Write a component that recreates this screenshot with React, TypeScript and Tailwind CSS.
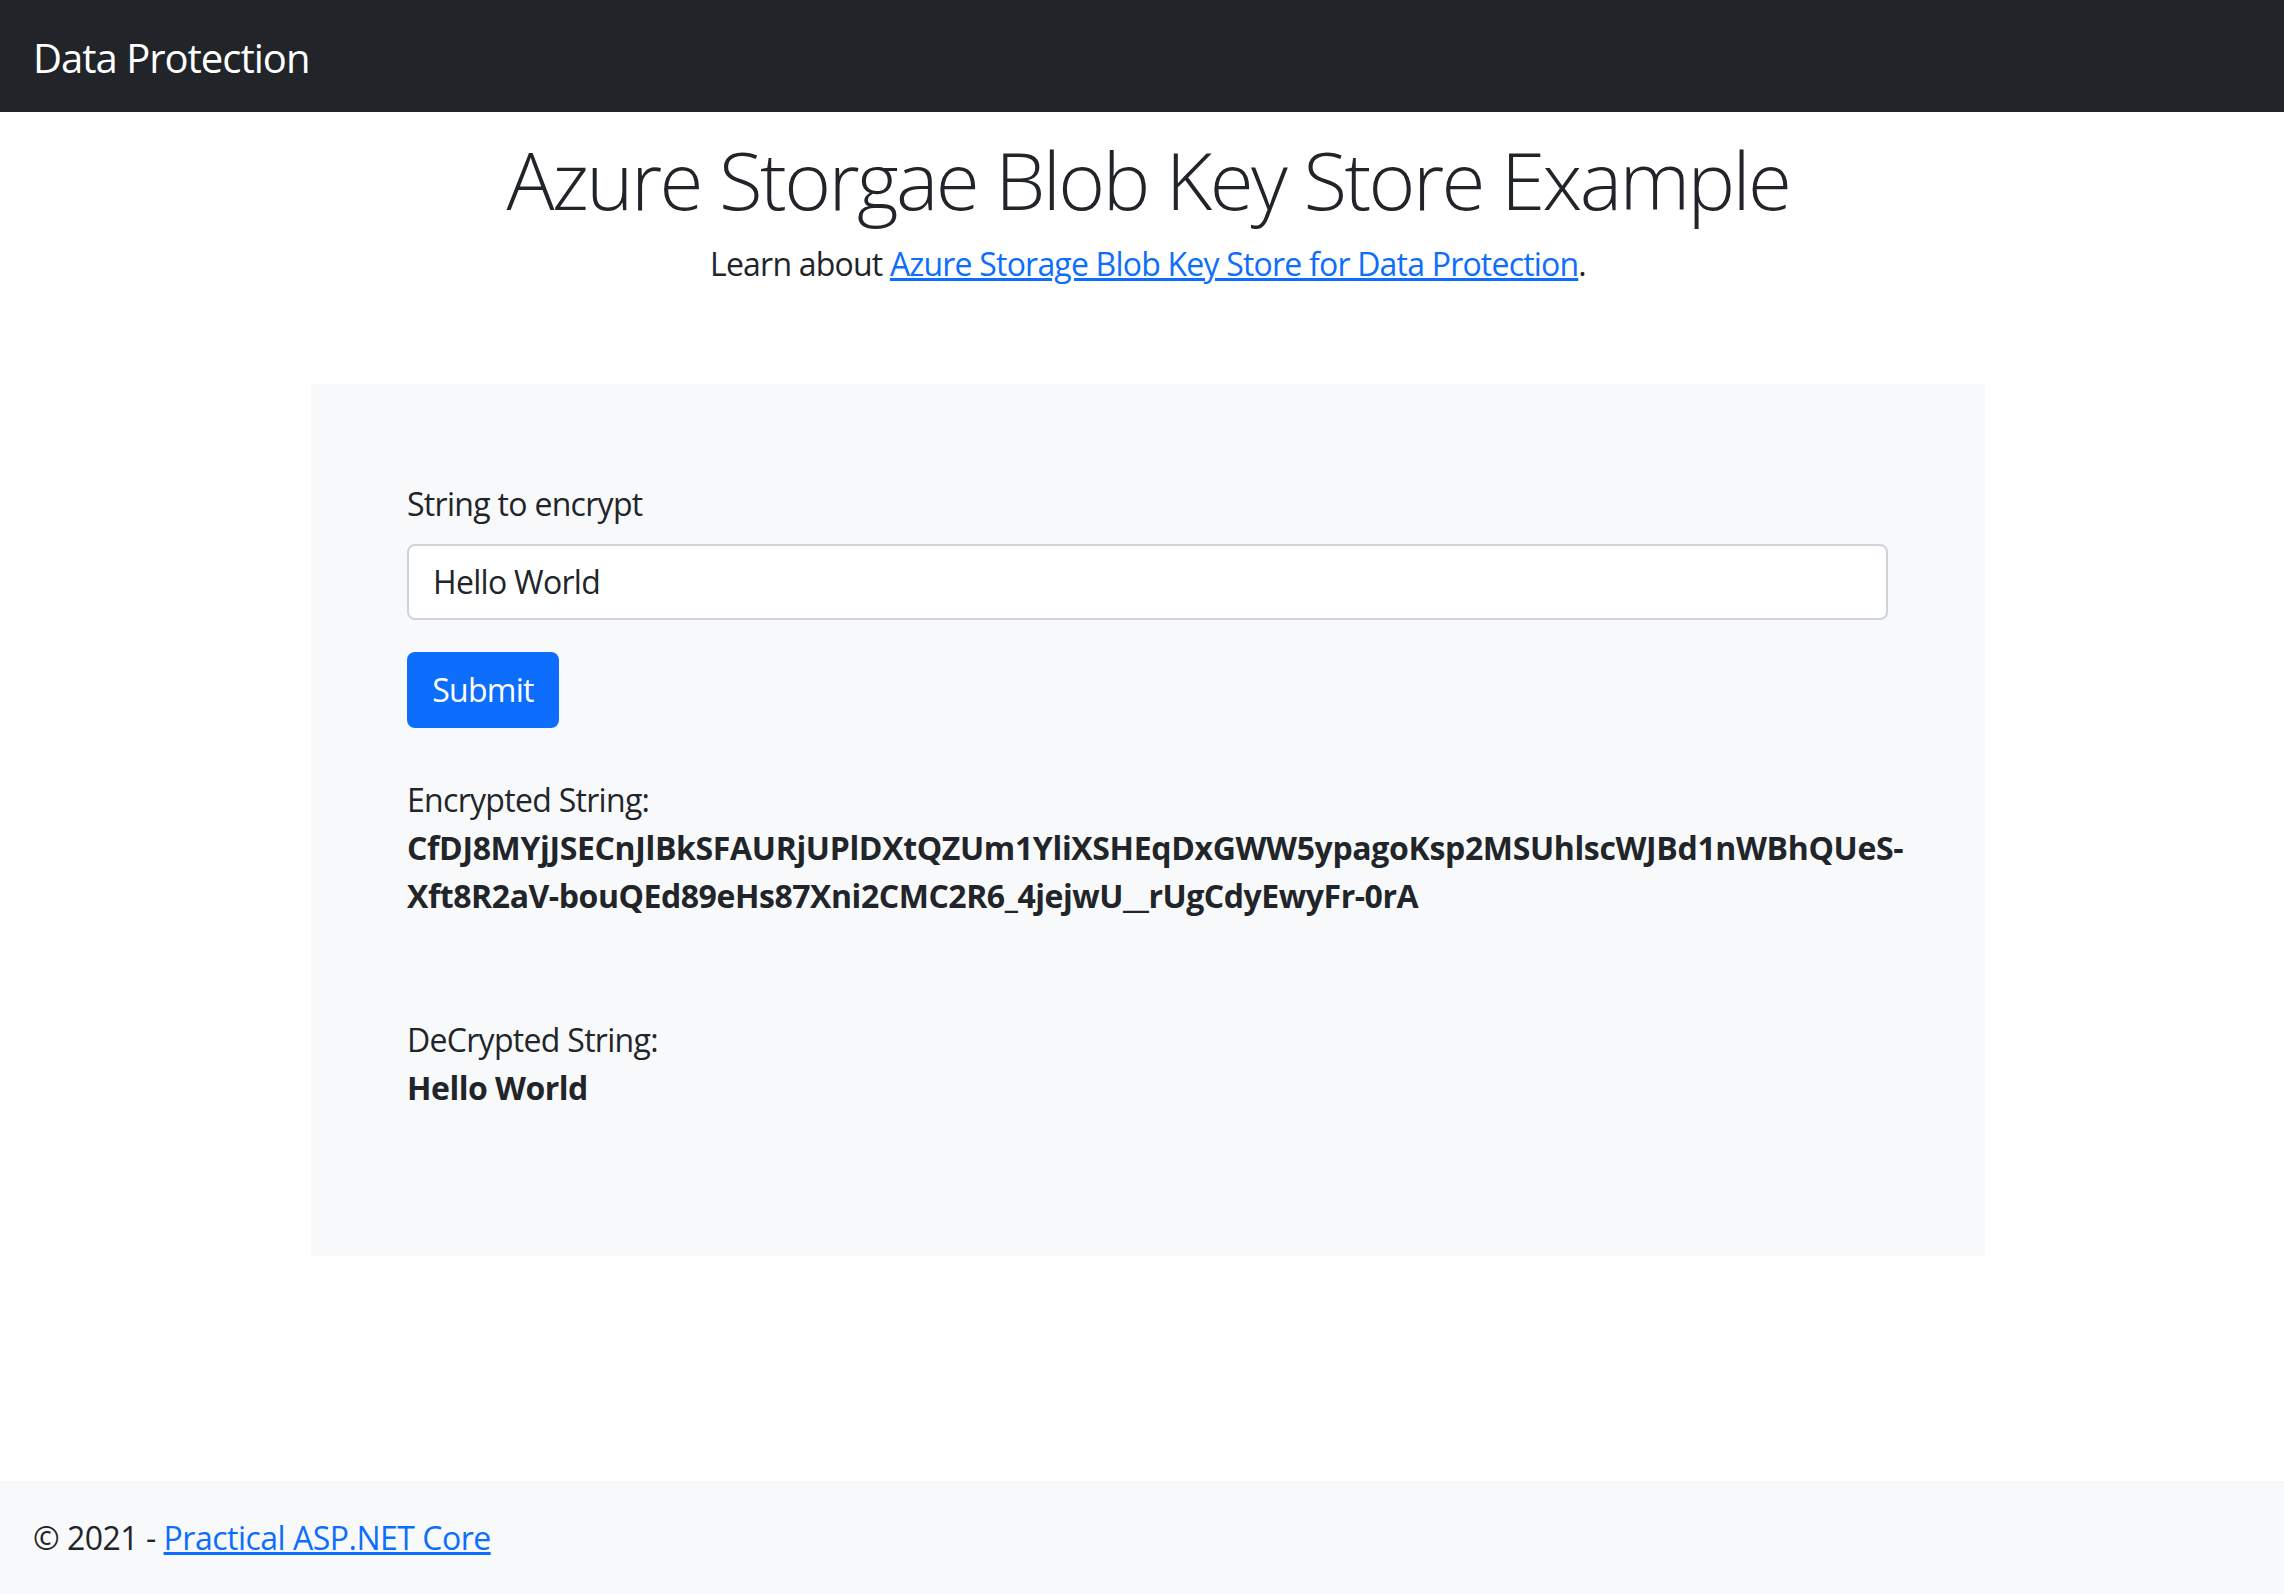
import React from "react";

export default function App() {
  return (
    <div className="min-h-screen flex flex-col bg-white text-[#212529] font-['Open_Sans',sans-serif] text-[32px] leading-[48px] tracking-[-0.7px]">
      <nav className="h-[112px] bg-[#212529] flex items-center pt-[4px] pl-[33px]">
        <span className="text-white text-[40px] leading-[60px] tracking-[-1px]">Data Protection</span>
      </nav>

      <main className="flex-1 pl-[12px] flex justify-center">
        <div className="w-[1674px] flex flex-col">
          <div className="text-center pt-[19px]">
            <h1 className="text-[80px] leading-[96px] font-light mb-[13px] tracking-[-2.6px]">Azure Storgae Blob Key Store Example</h1>
            <p className="tracking-[-0.8px]">
              Learn about{" "}
              <a href="#" className="text-[#0d6efd] underline">
                Azure Storage Blob Key Store for Data Protection
              </a>
              .
            </p>
          </div>

          <div className="mt-[96px] bg-[#f8f9fa] px-[96px] pt-[96px] pb-[144px]">
            <label className="block mb-[16px]">String to encrypt</label>
            <div className="w-[1481px] h-[76px] bg-white border-2 border-[#ced4da] rounded-[8px] flex items-center px-[24px] mb-[32px]">
              Hello World
            </div>
            <button className="w-[152px] h-[76px] bg-[#0d6efd] text-white rounded-[8px] leading-[48px] flex items-center justify-center">Submit</button>

            <div className="mt-[48px]">
              <div>Encrypted String:</div>
              <div className="font-bold whitespace-nowrap tracking-[-0.35px]">
                CfDJ8MYjJSECnJlBkSFAURjUPlDXtQZUm1YliXSHEqDxGWW5ypagoKsp2MSUhlscWJBd1nWBhQUeS-
                <br />
                <span className="tracking-[-0.45px]">Xft8R2aV-bouQEd89eHs87Xni2CMC2R6_4jejwU__rUgCdyEwyFr-0rA</span>
              </div>
            </div>

            <div className="mt-[96px]">
              <div>DeCrypted String:</div>
              <div className="font-bold tracking-[-0.5px]">Hello World</div>
            </div>
          </div>
        </div>
      </main>

      <footer className="h-[113px] bg-[#f8f9fa] flex items-center pl-[33px]">
        <span className="tracking-[-0.5px]">
          © 2021 -{" "}
          <a href="#" className="text-[#0d6efd] underline">
            Practical ASP.NET Core
          </a>
        </span>
      </footer>
    </div>
  );
}
